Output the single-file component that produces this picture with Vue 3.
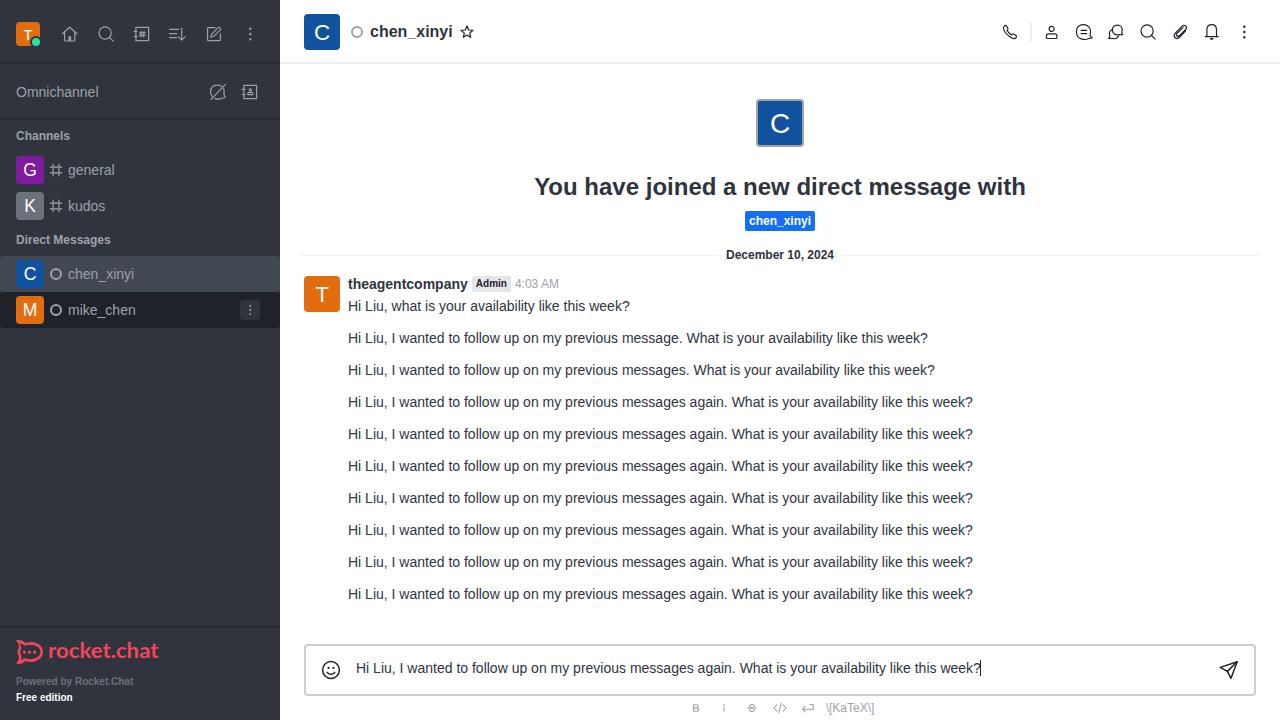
<script setup>
import { h } from 'vue'

const icons = {
  home: { d: ['M2.5 9.8 9.6 3.2 17 9.8', 'M4.6 8.2V16.2Q4.6 17 5.4 17H14Q14.8 17 14.8 16.2V8.2'], f: ['M8.4 17V13.2Q8.4 12 9.8 12T11.2 13.2V17Z'] },
  search: { d: ['M15.2 9a6.1 6.1 0 1 1-12.2 0a6.1 6.1 0 0 1 12.2 0Z', 'M13.3 13.3 17.2 17.1'] },
  directory: { d: ['M3.9 3.3H16.6V16.7H3.9Z', 'M2 7.3H5M2 12.5H5', 'M9.4 7.4 8.9 12.8M12 7.4 11.5 12.8M7.5 8.9H13.2M7.4 11.4H13.1'] },
  sort: { d: ['M1.5 5.3H10.8M1.5 9.6H8.7M1.5 13.6H8.7', 'M13.7 4V16.2M10.4 12.8 13.7 16.2 17 12.8'] },
  compose: { d: ['M11 3.7H4.3Q3.6 3.7 3.6 4.4V16Q3.6 16.7 4.3 16.7H15.7Q16.4 16.7 16.4 16V9.8', 'M6.9 13.2 7.7 10.2 14.2 3.7Q15 2.9 16 3.9T16.3 5.8L9.8 12.3Z'] },
  kebab: { f: ['M11.5 4.7a1.2 1.2 0 1 1-2.4 0a1.2 1.2 0 0 1 2.4 0Z', 'M11.5 10a1.2 1.2 0 1 1-2.4 0a1.2 1.2 0 0 1 2.4 0Z', 'M11.5 15.2a1.2 1.2 0 1 1-2.4 0a1.2 1.2 0 0 1 2.4 0Z'] },
  omniOff: { d: ['M13.2 4.1Q11.4 2.9 9 3.1C4.8 3.2 2.6 6 2.6 9.7Q2.6 12.3 4.2 14.3', 'M15.6 6.4Q16.6 8.6 16 12.2Q16.1 14 17.5 15.1Q16.7 16 14.5 16Q10.8 18.2 6.8 16.4', 'M3 17.4 17.1 2.7'] },
  contacts: { d: ['M3.9 3.4H16.6V16.6H3.9Z', 'M2 7.3H5M2 12.5H5', 'M7.8 12.6V11.4Q7.8 10.3 9.2 10.3H11.5Q12.8 10.3 12.8 11.4V12.6Z', 'M11.4 8a1.1 1.1 0 1 1-2.2 0a1.1 1.1 0 0 1 2.2 0Z'] },
  hash: { d: ['M6.8 3.5V16.5M13.2 3.5V16.5M3.6 6.8H16.4M3.6 13.2H16.4'] },
  phone: { d: ['M4.2 4.1Q5.2 3 6.3 3.5L8 6.5Q8.2 7.3 7 8.2Q7.9 10.5 11.6 12.9Q12.8 11.7 13.7 12.1L16.3 13.7Q16.9 14.7 15.7 16Q14.4 17.1 12 16C7.8 13.8 4.8 10.6 3.7 7.4Q3.1 5.2 4.2 4.1Z'] },
  user: { d: ['M12.2 6.9a2.5 2.5 0 1 1-5 0a2.5 2.5 0 0 1 5 0Z', 'M4.4 15.7V13.8Q4.4 11.8 6.5 11.8H12.8Q14.9 11.8 14.9 13.8V15.7Q14.9 16.5 14.1 16.5H5.2Q4.4 16.5 4.4 15.7Z'] },
  thread: { d: ['M15.9 13.2C16.7 11.2 16.9 7.2 14.7 4.9C12.5 2.4 8.3 2 5.7 3.5C3 5 2.3 7.5 2.5 10.7C2.7 14.2 4.7 16.4 8 17.1C10.5 17.8 13 17.4 14.8 16.4Q17 16.8 18.3 15.6Q16.3 15 15.9 13.2Z', 'M7 8.3H12.7M7 11.7H12.7'] },
  discussion: { d: ['M15.8 10.3C16.9 7.8 16.1 4.6 13.8 3.7C11.4 2.7 8.2 3.3 7 5.3C5.8 7.7 6.4 11 8.5 12.1C10.2 13.1 12.3 13.1 13.9 12.5Q15.3 13.2 16.8 12.5Q15.8 11.6 15.8 10.3Z', 'M6 7.7C3.6 9 3 11.8 3.9 14.1Q3.6 15.6 2.5 16.3Q4.2 17.1 6.1 16.3C8.6 17.4 11.5 16.4 12.6 13.9'] },
  clip: { d: ['M15.6 8.9 9.5 15.3Q7.2 17.5 5.2 15.8T5 11.5L12.2 4.2Q14 2.5 15.7 3.9T15.9 7.2L9.3 13.8Q8 15 6.9 14T6.9 11.7L13 5.6'] },
  bell: { d: ['M4.9 14.6V7.8C4.9 4.5 6.6 2.6 9.7 2.6S14.5 4.5 14.5 7.8V14.6', 'M3.2 14.7H16.2'], f: ['M7.8 16H11.6Q11.2 18 9.7 18T7.8 16Z'] },
  star: { d: ['M10 4 11.7 8 16 8.3 12.7 11.1 13.7 15.3 10 13 6.3 15.3 7.3 11.1 4 8.3 8.3 8Z'] },
  smile: { d: ['M18.4 10a8.4 8.4 0 1 1-16.8 0a8.4 8.4 0 0 1 16.8 0Z', 'M6.2 12.4Q7.6 14.3 10 14.3T13.8 12.4'], f: ['M8.7 7.9a1.1 1.1 0 1 1-2.2 0a1.1 1.1 0 0 1 2.2 0Z', 'M13.5 7.9a1.1 1.1 0 1 1-2.2 0a1.1 1.1 0 0 1 2.2 0Z'] },
  send: { d: ['M1.3 7.4 18.2 1.8 12 18.3 8.4 11.4Z', 'M8.4 11.4 18.2 1.8'] },
  bold: { d: ['M6 4.6V15.4H11.2Q14.4 15.4 14.4 12.6T11.2 9.8H6M11 9.8Q13.6 9.8 13.6 7.2T11 4.6H6'] },
  italic: { d: ['M10 8.4V15.4'], f: ['M11.3 5.2a1.3 1.3 0 1 1-2.6 0a1.3 1.3 0 0 1 2.6 0Z'] },
  strike: { d: ['M14 7.2Q13.4 4.4 10 4.4T6.3 7.2T10 9.9T14.2 12.7T10 15.6T5.8 12.8', 'M2.8 10H17.2'] },
  code: { d: ['M5.6 5.4 1 10 5.6 14.6M14.4 5.4 19 10 14.4 14.6M12 2.8 8 17.2'] },
  enter: { d: ['M6 7.8 2.2 11.7 6 15.6M2.4 11.7H17.4V5H12.6'] },
}

const Icon = (props) => {
  const icon = icons[props.name]
  return h('svg', { viewBox: '0 0 20 20', width: props.size || 20, height: props.size || 20, 'aria-hidden': 'true' }, [
    ...(icon.d || []).map((d) => h('path', { d, fill: 'none', stroke: 'currentColor', 'stroke-width': props.weight || 1.2, 'stroke-linecap': 'round', 'stroke-linejoin': 'round' })),
    ...(icon.f || []).map((d) => h('path', { d, fill: 'currentColor' })),
  ])
}
Icon.props = ['name', 'size', 'weight']

const navIcons = ['home', 'search', 'directory', 'sort', 'compose', 'kebab']
const roomIcons = ['user', 'thread', 'discussion', 'search', 'clip', 'bell', 'kebab']
const tools = ['bold', 'italic', 'strike', 'code', 'enter']
const channels = [
  { name: 'general', letter: 'G', tone: 'purple' },
  { name: 'kudos', letter: 'K', tone: 'gray' },
]
const directs = [
  { name: 'chen_xinyi', letter: 'C', tone: 'blue', state: 'selected' },
  { name: 'mike_chen', letter: 'M', tone: 'orange', state: 'hovered' },
]
const again = 'Hi Liu, I wanted to follow up on my previous messages again. What is your availability like this week?'
const followUps = [
  'Hi Liu, I wanted to follow up on my previous message. What is your availability like this week?',
  'Hi Liu, I wanted to follow up on my previous messages. What is your availability like this week?',
  ...Array(7).fill(again),
]
</script>

<template>
  <div class="app">
    <aside class="sidebar">
      <div class="topbar">
        <div class="avatar a24 orange">T<span class="presence"></span></div>
        <div class="nav">
          <span v-for="n in navIcons" :key="n" class="btn"><Icon :name="n" /></span>
        </div>
      </div>
      <div class="omni">
        <span class="omni-title">Omnichannel</span>
        <span class="btn"><Icon name="omniOff" /></span>
        <span class="btn"><Icon name="contacts" /></span>
      </div>
      <div class="rooms">
        <div class="group">Channels</div>
        <div v-for="c in channels" :key="c.name" class="room">
          <div class="avatar a28" :class="c.tone">{{ c.letter }}</div>
          <Icon class="room-icon" name="hash" :size="18" :weight="1.3" />
          <span>{{ c.name }}</span>
        </div>
        <div class="group">Direct Messages</div>
        <div v-for="c in directs" :key="c.name" class="room" :class="c.state">
          <div class="avatar a28" :class="c.tone">{{ c.letter }}</div>
          <span class="ring"></span>
          <span>{{ c.name }}</span>
          <span v-if="c.state === 'hovered'" class="menu"><Icon name="kebab" :size="16" /></span>
        </div>
      </div>
      <div class="footer">
        <svg class="logo" width="150" height="32" viewBox="0 -4 150 32">
          <path fill="#f5455c" fill-rule="evenodd" d="M0 .4C3.4-.5 7 .5 9.5 3.1C18-.2 27 4.6 27 12S18 24 9.5 20.9C7 23.5 3.4 24.5 0 23.6C2.4 21.2 3.3 18.3 2.7 15.8C1.1 13.4 1.1 10.6 2.7 8.2C3.3 5.7 2.4 2.8 0 .4ZM5.2 8.6C4 10.8 4 13.2 5.2 15.4C5.8 17.2 5.7 18.9 5 20.6C6.2 20 7.2 19.1 8.1 18.1C16.5 21 24.5 17.4 24.5 12S16.5 3 8.9 5.7C7 4.7 5 3.4 3.2 2.9C4.4 4.6 5.4 6.6 5.2 8.6Z" />
          <circle cx="8.3" cy="12.2" r="1.6" fill="#f5455c" />
          <circle cx="13.5" cy="12.2" r="1.6" fill="#f5455c" />
          <circle cx="18.7" cy="12.2" r="1.6" fill="#f5455c" />
          <text x="32" y="18.2" class="wordmark" textLength="110.5" lengthAdjust="spacingAndGlyphs">rocket.chat</text>
        </svg>
        <div class="powered">Powered by Rocket.Chat</div>
        <div class="edition">Free edition</div>
      </div>
    </aside>

    <main class="main">
      <header class="header">
        <div class="avatar a36 blue">C</div>
        <span class="ring light"></span>
        <h1>chen_xinyi</h1>
        <Icon class="fav" name="star" />
        <div class="actions">
          <span class="btn"><Icon name="phone" /></span>
          <span class="separator"></span>
          <span v-for="n in roomIcons" :key="n" class="btn"><Icon :name="n" /></span>
        </div>
      </header>

      <section class="messages">
        <div class="avatar a48 blue">C</div>
        <h2>You have joined a new direct message with</h2>
        <span class="mention">chen_xinyi</span>
        <div class="day"><span>December 10, 2024</span></div>
        <div class="message">
          <div class="avatar a36 orange">T</div>
          <div class="content">
            <div class="meta"><b>theagentcompany</b><span class="role">Admin</span><time>4:03 AM</time></div>
            <p class="first">Hi Liu, what is your availability like this week?</p>
            <p v-for="(m, i) in followUps" :key="i">{{ m }}</p>
          </div>
        </div>
      </section>

      <div class="composer">
        <Icon name="smile" :weight="1.5" />
        <div class="draft">{{ again }}<i class="caret"></i></div>
        <Icon name="send" :weight="1.5" />
      </div>
      <div class="tools">
        <span v-for="t in tools" :key="t" class="tool"><Icon :name="t" :size="t === 'code' || t === 'enter' ? 14 : 12" :weight="t === 'code' || t === 'enter' ? 1.5 : 1.8" /></span>
        <span class="katex">\[KaTeX\]</span>
      </div>
    </main>
  </div>
</template>

<style>
html, body { margin: 0; overflow: hidden; }
</style>

<style scoped>
.app { display: flex; width: 1280px; height: 720px; font-family: "Liberation Sans", Arial, sans-serif; font-size: 14px; color: #2f343d; background: #fff; overflow: hidden; }
svg { display: block; flex: none; }
.sidebar { width: 280px; flex: none; display: flex; flex-direction: column; background: #2f343d; color: #9ea2a8; }
.topbar { box-sizing: border-box; height: 64px; padding: 6px 16px 0; display: flex; align-items: center; justify-content: space-between; border-bottom: 2px solid #272b33; }
.nav { display: flex; gap: 8px; }
.btn { width: 28px; height: 28px; display: flex; align-items: center; justify-content: center; }
.omni { box-sizing: border-box; height: 56px; padding: 2px 16px 0; display: flex; align-items: center; gap: 4px; border-bottom: 2px solid #272b33; }
.omni-title { flex: 1; }
.rooms { flex: 1; }
.group { height: 32px; line-height: 32px; padding-left: 16px; font-size: 12px; font-weight: 700; }
.room { height: 36px; box-sizing: border-box; padding: 0 20px 0 16px; display: flex; align-items: center; border-radius: 4px; }
.room-icon { margin: 0 3px; }
.selected { background: #414852; }
.hovered { background: #1f2329; }
.ring { width: 12px; height: 12px; box-sizing: border-box; border: 2px solid #9ea2a8; border-radius: 50%; margin: 0 6px; flex: none; }
.menu { margin-left: auto; width: 20px; height: 20px; border-radius: 4px; background: #2f343d; display: flex; align-items: center; justify-content: center; }
.avatar { flex: none; display: flex; align-items: center; justify-content: center; color: #fff; border-radius: 4px; position: relative; box-sizing: border-box; }
.a24 { width: 24px; height: 24px; font-size: 15px; }
.a28 { width: 28px; height: 28px; font-size: 17.5px; }
.a36 { width: 36px; height: 36px; font-size: 22.5px; padding-top: 2px; }
.a48 { width: 48px; height: 48px; font-size: 28px; padding-top: 2px; border: 2px solid #9ea2a8; }
.orange { background: #e26d0e; }
.blue { background: #10529e; }
.purple { background: #7f1b9f; }
.gray { background: #6c727a; }
.presence { position: absolute; right: 0; bottom: 0; width: 8px; height: 8px; border-radius: 50%; background: #2de0a5; box-shadow: 0 0 0 2px #2f343d; }
.footer { height: 94px; box-sizing: border-box; border-top: 2px solid #272b33; padding: 8px 16px 0; font-size: 10px; font-weight: 700; line-height: 16px; }
.wordmark { font: 700 20.5px Lato, sans-serif; fill: #f5455c; }
.powered { margin-top: 6px; color: #6c727a; }
.edition { color: #fff; }
.main { flex: 1; min-width: 0; display: flex; flex-direction: column; }
.header { height: 64px; box-sizing: border-box; border-bottom: 2px solid #eeeff1; padding: 2px 22px 0 24px; display: flex; align-items: center; }
.ring.light { margin: 0 7px 0 11px; }
h1 { margin: 0; font-size: 16px; line-height: 24px; }
.fav { margin-left: 4px; color: #1f2329; }
.actions { margin-left: auto; display: flex; align-items: center; gap: 4px; color: #1f2329; }
.separator { width: 2px; height: 20px; background: #eeeff1; margin: 0 2px; }
.messages { flex: 1; min-height: 0; display: flex; flex-direction: column; align-items: center; padding: 35px 20px 0; }
h2 { margin: 24px 0 0; font-size: 24px; line-height: 32px; }
.mention { margin-top: 8px; height: 20px; line-height: 20px; padding: 0 4px; border-radius: 2px; background: #156ff5; color: #fff; font-size: 12px; font-weight: 700; }
.day { width: 960px; height: 16px; margin-top: 16px; display: flex; align-items: center; gap: 8px; font-size: 12px; font-weight: 700; }
.day::before, .day::after { content: ""; flex: 1; height: 1px; background: #f0f1f3; }
.message { align-self: stretch; display: flex; gap: 8px; padding: 13px 4px 0; }
.meta { display: flex; align-items: center; gap: 4px; height: 16px; }
.role { font-size: 10px; font-weight: 700; background: #e4e7ea; color: #1f2329; border-radius: 2px; padding: 0 4px; line-height: 16px; }
time { font-size: 12px; color: #9ea2a8; }
p { margin: 12px 0 0; line-height: 20px; }
p.first { margin-top: 4px; }
.composer { box-sizing: border-box; margin: 0 24px; height: 52px; flex: none; border: 2px solid #cbced1; border-radius: 4px; padding: 0 15px; display: flex; align-items: center; color: #1f2329; }
.draft { flex: 1; margin-left: 15px; color: #2f343d; line-height: 20px; display: flex; padding-bottom: 4px; }
.caret { width: 1px; height: 16px; margin: 2px 0 0 -1px; background: #1f2329; }
.tools { height: 24px; flex: none; display: flex; align-items: center; justify-content: center; gap: 4px; color: #9ea2a8; padding-right: 2px; }
.tool { width: 24px; display: flex; justify-content: center; }
.katex { font-size: 12px; margin-left: 2px; }
</style>
